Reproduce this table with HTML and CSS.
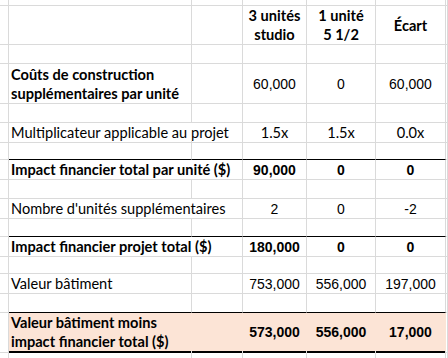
FILE: index.html
```html
<!DOCTYPE html>
<html>
<head>
    <title>Impact financier - unités</title>
    <link rel="stylesheet" href="styles.css">
</head>
<body>
    <div class="sheet">
        <div class="row h6">
            <div></div><div></div><div></div><div></div><div></div><div></div><div></div>
        </div>
        <div class="row h39">
            <div></div><div></div><div></div>
            <div class="head">3 unités<br>studio</div>
            <div class="head">1 unité<br>5 1/2</div>
            <div class="head">Écart</div>
            <div></div>
        </div>
        <div class="row h19">
            <div></div><div></div><div></div><div></div><div></div><div></div><div></div>
        </div>
        <div class="row h40">
            <div></div>
            <div class="label bold">Coûts de construction<br>supplémentaires par unité</div>
            <div></div>
            <div class="num">60,000</div>
            <div class="num">0</div>
            <div class="num">60,000</div>
            <div></div>
        </div>
        <div class="row h19">
            <div></div><div></div><div></div><div></div><div></div><div></div><div></div>
        </div>
        <div class="row h18">
            <div></div>
            <div class="label wide">Multiplicateur applicable au projet</div>
            <div class="num small">1.5x</div>
            <div class="num small">1.5x</div>
            <div class="num small">0.0x</div>
            <div></div>
        </div>
        <div class="row h19 rule">
            <div></div><div></div><div></div><div></div><div></div><div></div><div></div>
        </div>
        <div class="row h19">
            <div></div>
            <div class="label wide bold">Impact financier total par unité ($)</div>
            <div class="num bold">90,000</div>
            <div class="num bold">0</div>
            <div class="num bold">0</div>
            <div></div>
        </div>
        <div class="row h20">
            <div></div><div></div><div></div><div></div><div></div><div></div><div></div>
        </div>
        <div class="row h19">
            <div></div>
            <div class="label wide">Nombre d'unités supplémentaires</div>
            <div class="num">2</div>
            <div class="num">0</div>
            <div class="num">-2</div>
            <div></div>
        </div>
        <div class="row h19 rule">
            <div></div><div></div><div></div><div></div><div></div><div></div><div></div>
        </div>
        <div class="row h19">
            <div></div>
            <div class="label wide bold">Impact financier projet total ($)</div>
            <div class="num bold">180,000</div>
            <div class="num bold">0</div>
            <div class="num bold">0</div>
            <div></div>
        </div>
        <div class="row h18">
            <div></div><div></div><div></div><div></div><div></div><div></div><div></div>
        </div>
        <div class="row h20">
            <div></div>
            <div class="label">Valeur bâtiment</div>
            <div></div>
            <div class="num">753,000</div>
            <div class="num">556,000</div>
            <div class="num">197,000</div>
            <div></div>
        </div>
        <div class="row h19 rule">
            <div></div><div></div><div></div><div></div><div></div><div></div><div></div>
        </div>
        <div class="row h38 total">
            <div></div>
            <div class="label wide bold">Valeur bâtiment moins<br>impact financier total ($)</div>
            <div class="num bold">573,000</div>
            <div class="num bold">556,000</div>
            <div class="num bold">17,000</div>
            <div></div>
        </div>
        <div class="row h20">
            <div></div><div></div><div></div><div></div><div></div><div></div><div></div>
        </div>
    </div>
</body>
</html>
```

FILE: styles.css
```css
body {
    margin: 0;
    background: #fff;
    color: #000;
    font-family: Lato, "Open Sans", sans-serif;
    font-size: 14.6px;
}
.sheet {
    width: 448px;
    height: 358px;
    overflow: hidden;
}
.row {
    display: grid;
    grid-template-columns: 9px 183px 51px 64px 69px 70px 1fr;
}
.row > div {
    box-sizing: border-box;
    border-right: 1px solid #dadada;
    border-bottom: 1px solid #dadada;
    display: flex;
    align-items: center;
    white-space: nowrap;
}
.h6 { height: 6px; }
.h18 { height: 18px; }
.h19 { height: 19px; }
.h20 { height: 20px; }
.h38 { height: 38px; }
.h39 { height: 39px; }
.h40 { height: 40px; }

.rule > div:nth-child(n+2):nth-child(-n+6) {
    border-bottom-color: #000;
}
.label {
    padding-left: 2px;
    line-height: 19px;
}
.wide {
    grid-column: span 2;
}
.bold {
    font-weight: bold;
}
.head {
    justify-content: center;
    text-align: center;
    font-weight: bold;
    line-height: 19px;
}
.num {
    justify-content: center;
    font-family: "Liberation Sans", Arial, sans-serif;
    font-size: 14px;
}
.num.small {
    font-family: Lato, "Open Sans", sans-serif;
    font-size: 14.6px;
}
.total > div:nth-child(n+2):nth-child(-n+5) {
    background: #fce4d6;
    border-right-color: #fce4d6;
    border-bottom: 2px solid #000;
}
.total > div:nth-child(5) {
    border-right-color: #dadada;
}
```
